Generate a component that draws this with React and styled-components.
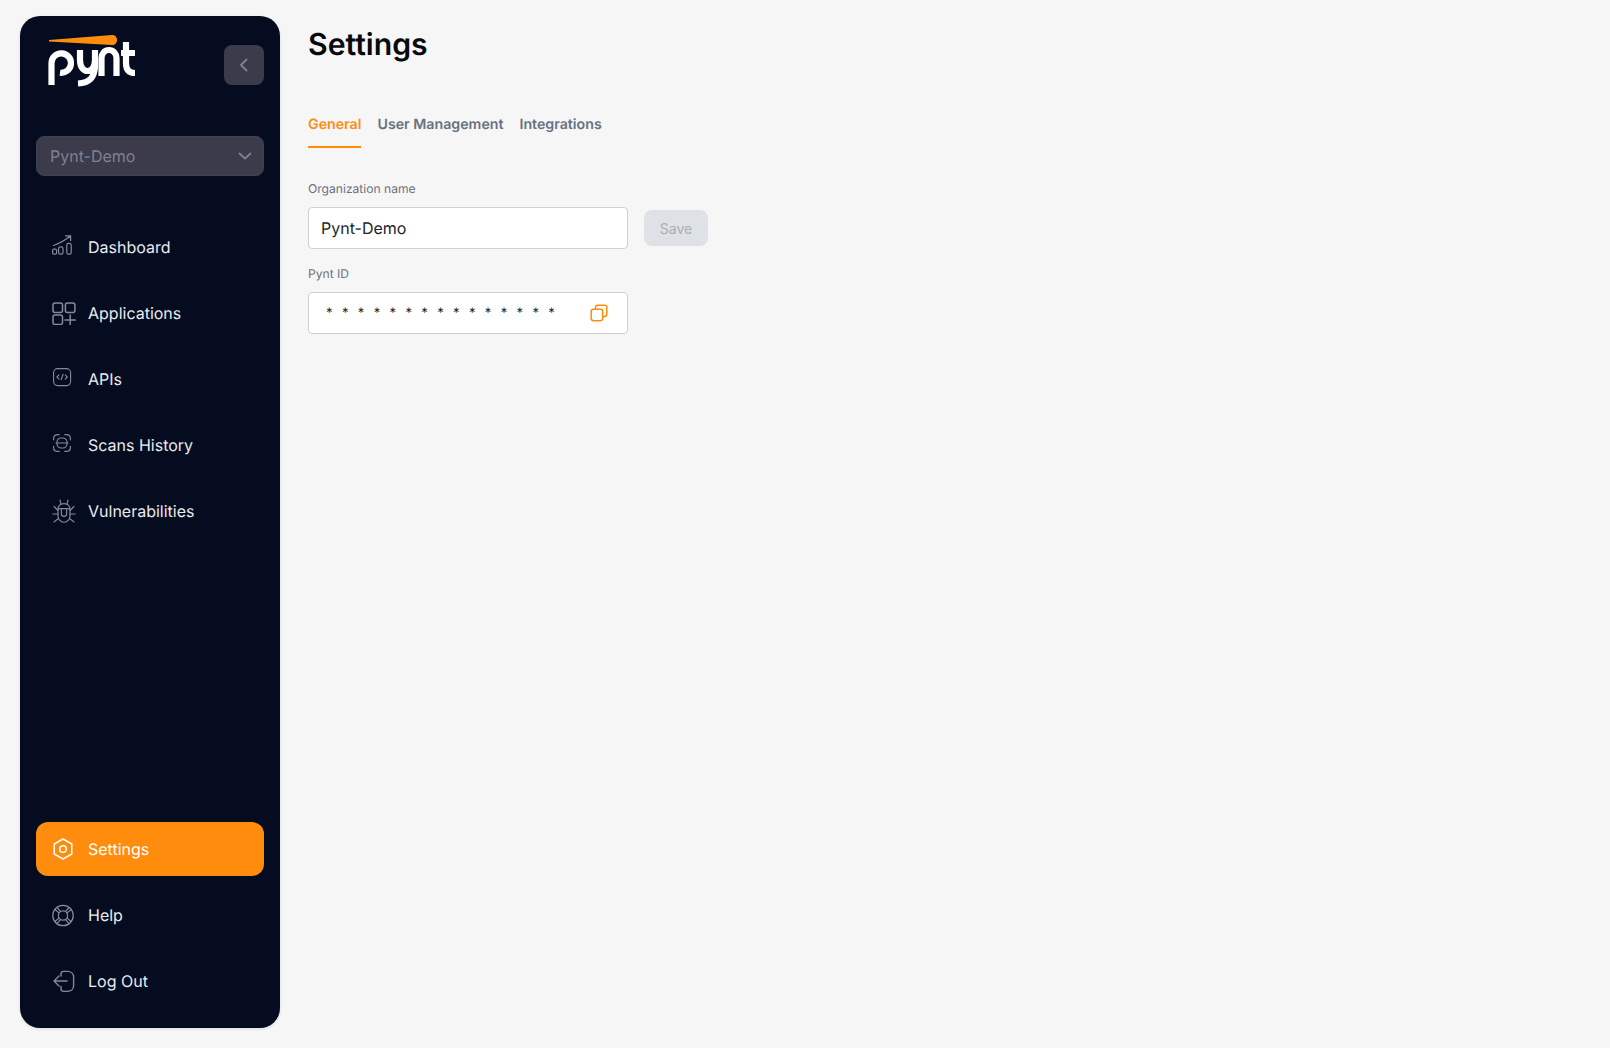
import React from "react";
import styled, { createGlobalStyle } from "styled-components";

const Global = createGlobalStyle`
  * { box-sizing: border-box; }
  html, body { margin: 0; padding: 0; height: 100%; }
  body {
    background: #f6f6f6;
    font-family: Inter, "Liberation Sans", sans-serif;
    text-rendering: geometricPrecision;
    -webkit-font-smoothing: antialiased;
  }
`;

const Page = styled.div`
  display: flex;
  height: 1048px;
  padding: 16px 20px 20px;
  background: #f6f6f6;
`;

const Sidebar = styled.aside`
  width: 260px;
  flex: none;
  display: flex;
  flex-direction: column;
  padding: 29px 16px 20px;
  background: #050c20;
  border-radius: 20px;
  box-shadow: 0 1px 3px rgba(5, 12, 32, 0.12);
`;

const Brand = styled.div`
  display: flex;
  justify-content: space-between;
  align-items: flex-start;
  height: 40px;
`;

const LogoMark = styled.svg`
  display: block;
  width: 90px;
  height: 55px;
  margin: -12px 0 0 11px;
`;

const CollapseButton = styled.button`
  width: 40px;
  height: 40px;
  padding: 0;
  display: flex;
  align-items: center;
  justify-content: center;
  border: 0;
  border-radius: 8px;
  background: #3b3b4b;
  color: #77818f;
`;

const OrgSelect = styled.div`
  margin-top: 51px;
  height: 40px;
  display: flex;
  align-items: center;
  justify-content: space-between;
  padding: 0 10px 0 13px;
  border-radius: 8px;
  background: #3b3b4b;
  color: #7f8290;
  font-size: 16px;
  border: 1px solid #40404f;
`;

const NavList = styled.nav`
  display: flex;
  flex-direction: column;
  gap: 12px;
  margin-top: ${(p) => p.$top || 0}px;
`;

const Spacer = styled.div`
  flex: 1;
`;

const NavItem = styled.a`
  height: 54px;
  display: flex;
  align-items: center;
  gap: 12px;
  padding-left: 16px;
  border-radius: 12px;
  font-size: 16px;
  color: ${(p) => (p.$active ? "#fff" : "#e9ebef")};
  background: ${(p) => (p.$active ? "#ff8c0d" : "transparent")};
`;

const NavIcon = styled.svg`
  width: 24px;
  height: 24px;
  flex: none;
  fill: none;
  stroke: ${(p) => (p.$active ? "#fff" : "#858a99")};
  stroke-width: ${(p) => p.$w || 1.4};
  stroke-linecap: round;
  stroke-linejoin: round;
`;

const Main = styled.main`
  flex: 1;
  padding: 0 0 0 28px;
`;

const Title = styled.h1`
  margin: 10px 0 0;
  font-size: 30.2px;
  line-height: 38px;
  font-weight: 600;
  color: #08090c;
`;

const Tabs = styled.div`
  display: flex;
  gap: 16px;
  margin-top: 44px;
`;

const Tab = styled.div`
  height: 40px;
  padding-top: 7px;
  font-size: 14.2px;
  line-height: 20px;
  font-weight: 600;
  color: ${(p) => (p.$active ? "#ff8c0d" : "#667281")};
  border-bottom: 2px solid ${(p) => (p.$active ? "#ff8c0d" : "transparent")};
`;

const Label = styled.div`
  font-size: 12.1px;
  line-height: 16px;
  color: #6d7180;
  margin-bottom: 10px;
`;

const FirstLabel = styled(Label)`
  margin-top: 33px;
`;

const Row = styled.div`
  display: flex;
  align-items: center;
  gap: 16px;
  margin-bottom: 17px;
`;

const Field = styled.div`
  width: 320px;
  height: 42px;
  display: flex;
  align-items: center;
  justify-content: space-between;
  padding: 0 19px 1px 12px;
  background: #fff;
  border: 1px solid #cfd0d3;
  border-radius: 4px;
  color: #212529;
  font-size: 16px;
`;

const Stars = styled.span`
  font-size: 13px;
  letter-spacing: 9.37px;
  margin: 1px 0 0 5px;
  color: #212529;
`;

const SaveButton = styled.button`
  width: 64px;
  height: 36px;
  padding: 0;
  border: 0;
  border-radius: 8px;
  background: #dee1e5;
  color: #a8aeb6;
  font: 400 14px Inter, "Liberation Sans", sans-serif;
`;

const Logo = () => (
  <LogoMark viewBox="0 0 90 55" fill="none">
    <path d="M2 7 L65 2 C68 1.8 70 4 70 7 C70 10 68 12 65 12 L2 8.5 Z" fill="#ff8c0d" />
    <g stroke="#fff" strokeWidth="6.2" fill="none">
      <path d="M4.5 52 V30 A9.75 9.75 0 1 1 13 39.7" />
      <path d="M33 17 V27 C33 34 36.5 38 40.5 38 C44.5 38 48 34 48 27 V17 M48 27 V32 C48 44 43 50 31 50.5" />
      <path d="M54.5 43 V25 A7.5 8 0 0 1 69.5 25 V43" />
      <path d="M79 9 V30 C79 37 82 40 88 40 M74 20 H88" />
    </g>
  </LogoMark>
);

const DashboardIcon = () => (
  <NavIcon viewBox="0 0 24 24" $w={1.2}>
    <rect x="0.6" y="14.2" width="4" height="5" rx="1.2" />
    <rect x="6.6" y="11.8" width="4.4" height="7.4" rx="1.6" />
    <rect x="14.8" y="8.4" width="4.4" height="10.8" rx="1.6" />
    <path d="M1.5 10.5 C7 8.5 13 5.5 18.3 1 M13.5 0.8 H18.6 V5.6" />
  </NavIcon>
);

const AppsIcon = () => (
  <NavIcon viewBox="0 0 24 24" $w={1.5}>
    <rect x="1" y="2" width="9.5" height="9.5" rx="2" />
    <rect x="13.4" y="2" width="9.5" height="9.5" rx="2" />
    <rect x="1" y="14" width="9.5" height="9.5" rx="2" />
    <path d="M18.2 14 V24 M13 19 H23.4" />
  </NavIcon>
);

const ApiIcon = () => (
  <NavIcon viewBox="0 0 24 24" $w={1.1}>
    <rect x="1.6" y="1.6" width="17" height="17" rx="4" />
    <path d="M7 7.8 L4.9 10 L7 12.2 M13.2 7.8 L15.3 10 L13.2 12.2 M11.1 7.2 L9.1 12.8" />
  </NavIcon>
);

const ScanIcon = () => (
  <NavIcon viewBox="0 0 24 24" $w={1.15}>
    <path d="M1.6 6.8 V5.6 C1.6 3 3.2 1.6 5.6 1.6 H7.2 M12.8 1.6 H14.4 C16.8 1.6 18.4 3 18.4 5.6 V6.8 M18.4 13.2 V14.4 C18.4 16.8 16.8 18.4 14.4 18.4 H12.8 M7.2 18.4 H5.6 C3.2 18.4 1.6 16.8 1.6 14.4 V13.2" />
    <rect x="5" y="5" width="10" height="10" rx="4.2" />
    <path d="M4 10 H16" />
  </NavIcon>
);

const BugIcon = () => (
  <NavIcon viewBox="0 0 24 24" $w={1.15}>
    <path d="M6 10 C6 7 8.5 4.6 12 4.6 C15.5 4.6 18 7 18 10 V17 C18 20.6 15.4 23.2 12 23.2 C8.6 23.2 6 20.6 6 17 Z" />
    <path d="M6.1 9.6 H17.9 M9.4 9.6 V15 C9.4 16.4 10.5 17.4 12 17.4 C13.5 17.4 14.6 16.4 14.6 15 V9.6" />
    <path d="M9 5.4 L8 1 M15 5.4 L16 1 M6 11.5 L2 7.5 M18 11.5 L22 7.5 M6 15 H0.8 M18 15 H23.2 M6.4 19.4 L2 23 M17.6 19.4 L22 23" />
  </NavIcon>
);

const SettingsIcon = () => (
  <NavIcon viewBox="0 0 24 24" $active $w={1.5}>
    <path d="M11 2 L19.8 7 V17 L11 22 L2.2 17 V7 Z" />
    <circle cx="11" cy="12" r="3.3" />
  </NavIcon>
);

const HelpIcon = () => (
  <NavIcon viewBox="0 0 24 24" $w={1.25}>
    <circle cx="11" cy="12.5" r="10.2" />
    <circle cx="11" cy="12.5" r="4.6" />
    <path d="M5 4.3 L8.4 8.4 M3 6.5 L6.9 9.9 M17 4.3 L13.6 8.4 M19 6.5 L15.1 9.9 M5 20.7 L8.4 16.6 M3 18.5 L6.9 15.1 M17 20.7 L13.6 16.6 M19 18.5 L15.1 15.1" />
  </NavIcon>
);

const LogoutIcon = () => (
  <NavIcon viewBox="0 0 24 24" $w={1.4}>
    <path d="M2 12 H15 M7 7 L2 12 L7 17" />
    <path d="M9 7 V5 C9 3.4 10.2 2.4 11.8 2.4 H15.5 C19 2.4 21.6 4.6 21.6 8 V16.5 C21.6 20 19 22.4 15.5 22.4 H11.8 C10.2 22.4 9 21.4 9 19.8 V17.5" />
  </NavIcon>
);

const ChevronSvg = styled.svg`
  fill: none;
  stroke: currentColor;
  stroke-width: ${(p) => p.$w || 1.5};
  stroke-linecap: round;
  stroke-linejoin: round;
`;

const CopySvg = styled.svg`
  width: 18px;
  height: 18px;
  fill: none;
  stroke: #ff8c0d;
  stroke-width: 1.5;
  stroke-linejoin: round;
`;

const topItems = [
  ["Dashboard", DashboardIcon],
  ["Applications", AppsIcon],
  ["APIs", ApiIcon],
  ["Scans History", ScanIcon],
  ["Vulnerabilities", BugIcon],
];

export default function App() {
  return (
    <Page>
      <Global />
      <Sidebar>
        <Brand>
          <Logo />
          <CollapseButton aria-label="Collapse">
            <ChevronSvg width="16" height="16" viewBox="0 0 16 16" $w={2}>
              <path d="M10.5 2.5 L5 8 L10.5 13.5" />
            </ChevronSvg>
          </CollapseButton>
        </Brand>
        <OrgSelect>
          Pynt-Demo
          <ChevronSvg width="16" height="16" viewBox="0 0 16 16" $w={1.7}>
            <path d="M2.5 5.5 L8 10.5 L13.5 5.5" />
          </ChevronSvg>
        </OrgSelect>
        <NavList $top={44}>
          {topItems.map(([label, Icon]) => (
            <NavItem key={label}>
              <Icon />
              {label}
            </NavItem>
          ))}
        </NavList>
        <Spacer />
        <NavList>
          <NavItem $active>
            <SettingsIcon />
            Settings
          </NavItem>
          <NavItem>
            <HelpIcon />
            Help
          </NavItem>
          <NavItem>
            <LogoutIcon />
            Log Out
          </NavItem>
        </NavList>
      </Sidebar>
      <Main>
        <Title>Settings</Title>
        <Tabs>
          <Tab $active>General</Tab>
          <Tab>User Management</Tab>
          <Tab>Integrations</Tab>
        </Tabs>
        <FirstLabel>Organization name</FirstLabel>
        <Row>
          <Field>Pynt-Demo</Field>
          <SaveButton>Save</SaveButton>
        </Row>
        <Label>Pynt ID</Label>
        <Row>
          <Field>
            <Stars>***************</Stars>
            <CopySvg viewBox="0 0 18 18">
              <rect x="1.2" y="5.2" width="11.5" height="11.5" rx="2.4" />
              <path d="M5.5 5 V3.4 C5.5 2.1 6.4 1.2 7.7 1.2 H14.6 C15.9 1.2 16.8 2.1 16.8 3.4 V10.3 C16.8 11.6 15.9 12.5 14.6 12.5 H13" />
            </CopySvg>
          </Field>
        </Row>
      </Main>
    </Page>
  );
}
